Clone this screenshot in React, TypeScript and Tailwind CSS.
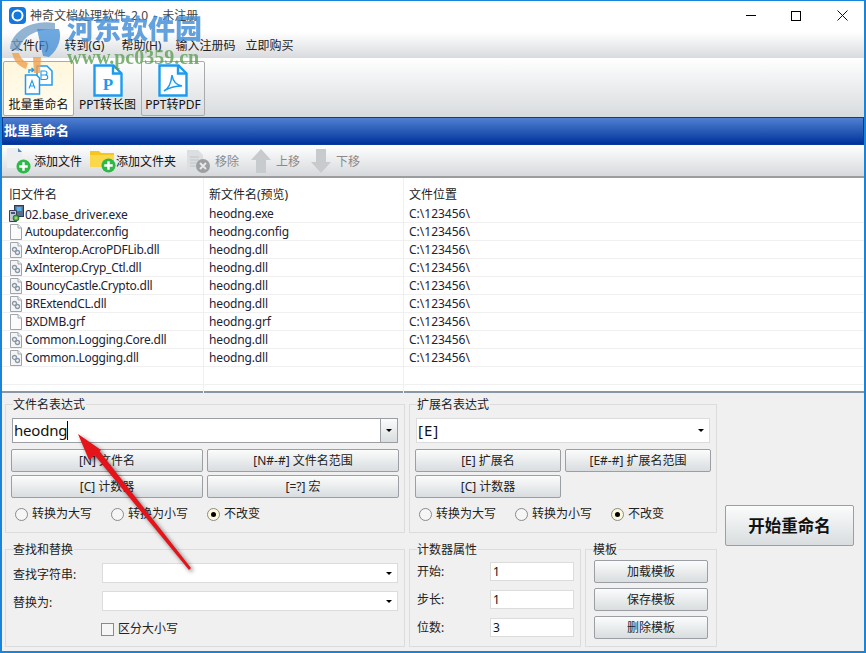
import type { ReactNode } from "react";

const FONT = "font-['Noto_Sans','Noto_Sans_CJK_SC',sans-serif]";

const rows = [
  ["02.base_driver.exe", "heodng.exe", "exe"],
  ["Autoupdater.config", "heodng.config", "blank"],
  ["AxInterop.AcroPDFLib.dll", "heodng.dll", "dll"],
  ["AxInterop.Cryp_Ctl.dll", "heodng.dll", "dll"],
  ["BouncyCastle.Crypto.dll", "heodng.dll", "dll"],
  ["BRExtendCL.dll", "heodng.dll", "dll"],
  ["BXDMB.grf", "heodng.grf", "blank"],
  ["Common.Logging.Core.dll", "heodng.dll", "dll"],
  ["Common.Logging.dll", "heodng.dll", "dll"],
];

function FileIcon({ kind }: { kind: string }) {
  if (kind === "exe") {
    return (
      <svg width="16" height="18" viewBox="0 0 16 18" className="shrink-0">
        <rect x="6.500" y="0.500" width="9" height="11" fill="#5a6f8c" stroke="#2c3a55" />
        <rect x="8.500" y="2" width="5" height="4" fill="#58b4ef" />
        <path d="M1.500 5.500h7v11h-7z" fill="#c5c9d2" stroke="#3b4257" />
        <rect x="3" y="7" width="4" height="2" fill="#40557f" />
        <circle cx="8" cy="13" r="3" fill="#3aa655" stroke="#1b5b2a" strokeWidth="0.7" />
        <path d="M6.500 13h3M8 11.500v3" stroke="#f2dd55" strokeWidth="0.9" />
      </svg>
    );
  }
  return (
    <svg width="12" height="16" viewBox="0 0 12 16" className="mx-[2px] shrink-0">
      <path d="M.5.500h7.500l3.500 3.500v11.500H.5z" fill={kind === "dll" ? "#f4f5f6" : "#fbfbfb"} stroke="#a0a5aa" />
      <path d="M8 .5v3.500h3.500" fill="#eef0f2" stroke="#a0a5aa" />
      {kind === "dll" && (
        <g fill="none" stroke="#8b97a5" strokeWidth="1.300">
          <circle cx="4.500" cy="7.500" r="2" />
          <circle cx="7.500" cy="10.500" r="2" />
        </g>
      )}
    </svg>
  );
}

function PageIcon({ children }: { children: ReactNode }) {
  return (
    <svg width="30" height="33" viewBox="0 0 30 33" className="shrink-0">
      <path d="M1.500 1.500h19l8 8v22h-27z" fill="#fff" stroke="#1c9cf0" strokeWidth="2.400" />
      <path d="M20 1.500v8h8.500" fill="none" stroke="#1c9cf0" strokeWidth="2.400" />
      {children}
    </svg>
  );
}

function RenameIcon() {
  return (
    <svg width="30" height="31" viewBox="0 0 30 31" className="shrink-0">
      <path d="M13 1h10l5 5v14H13z" fill="#fff" stroke="#1c9cf0" strokeWidth="1.500" />
      <path d="M1.500 10h11l3 3v16h-14z" fill="#fff" stroke="#1c9cf0" strokeWidth="1.500" />
      <path d="M5 20.500l3-8 3 8M6 18h4" fill="none" stroke="#1c9cf0" strokeWidth="1.100" transform="translate(0 3)" />
      <path d="M17 6h4a2 2 0 0 1 0 4h-4zm0 4h4.500a2.200 2.200 0 0 1 0 4.500H17z" fill="none" stroke="#1c9cf0" strokeWidth="1.100" />
      <path d="M5 8V5h4M7.500 3l2.500 2-2.500 2" fill="none" stroke="#1c9cf0" strokeWidth="1.400" />
    </svg>
  );
}

function PlusBadge() {
  return (
    <svg width="15" height="15" viewBox="0 0 16 16" className="absolute bottom-0 right-0">
      <circle cx="8" cy="8" r="7.500" fill="#2eb84a" />
      <path d="M8 3.500v9M3.500 8h9" stroke="#fff" strokeWidth="2.600" />
    </svg>
  );
}

function ToolButton({ label, active, icon, width }: { label: string; active?: boolean; icon: ReactNode; width: string }) {
  return (
    <div
      className={`flex h-[55px] ${width} flex-col items-center rounded-[2px] border border-[#a8aaac] pt-[2px] ${
        active ? "bg-gradient-to-b from-[#fff7dc] to-[#fffdf2]" : "bg-transparent"
      }`}
    >
      <div className="flex h-[33px] items-center">{icon}</div>
      <span className="text-[12px] leading-[16px] text-[#111]">{label}</span>
    </div>
  );
}

function ActionItem({ icon, label, muted, className }: { icon: ReactNode; label: string; muted?: boolean; className: string }) {
  return (
    <div className={`flex items-center ${className}`}>
      {icon}
      <span className={`pt-[2px] text-[12px] ${muted ? "text-[#8a8a8a]" : "text-[#111]"}`}>{label}</span>
    </div>
  );
}

function Btn({ children, className }: { children: ReactNode; className: string }) {
  return (
    <div
      className={`flex items-center justify-center rounded-[2px] border border-[#9b9fa3] bg-gradient-to-b from-[#fbfcfc] to-[#d9dddf] pt-px text-[12px] text-[#222] ${className}`}
    >
      {children}
    </div>
  );
}

function Group({ title, className, children }: { title: string; className: string; children: ReactNode }) {
  return (
    <div className={`relative border border-[#dcdcdc] ${className}`}>
      <span className="absolute left-[7px] top-[-7px] bg-[#f0f0f0] pr-px text-[12px] leading-[14px] text-[#222]">{title}</span>
      {children}
    </div>
  );
}

function Caret() {
  return <span className="h-0 w-0 border-x-[3px] border-t-[3px] border-x-transparent border-t-black" />;
}

function Combo({ children, className, boxedArrow }: { children?: ReactNode; className: string; boxedArrow?: boolean }) {
  return (
    <div className={`flex items-center bg-white ${className}`}>
      <span className="flex flex-1 items-center pl-px text-[15px] text-[#111]">{children}</span>
      <span
        className={`flex h-full w-[17px] items-center justify-center ${
          boxedArrow ? "border-l border-[#9b9fa3] bg-gradient-to-b from-[#fbfcfc] to-[#d9dddf]" : ""
        }`}
      >
        <Caret />
      </span>
    </div>
  );
}

function Radios() {
  return (
    <div className="flex text-[12px] text-[#222]">
      {["转换为大写", "转换为小写", "不改变"].map((label, i) => (
        <div key={label} className="flex w-[96px] items-center gap-[4px]">
          <span className={`flex h-[13px] w-[13px] items-center justify-center rounded-full border border-[#8a8a8a] ${i === 2 ? "bg-[#fdf7dc]" : "bg-[#f6f6f6]"}`}>
            {i === 2 && <span className="h-[5px] w-[5px] rounded-full bg-black" />}
          </span>
          {label}
        </div>
      ))}
    </div>
  );
}

function FieldRow({ label, value }: { label: string; value: string }) {
  return (
    <div className="flex h-[19px] items-center">
      <span className="w-[73px] pt-px text-[12px] text-[#222]">{label}</span>
      <span className="flex h-[19px] w-[84px] items-center border border-[#dcdcdc] bg-white pl-[2px] pt-px text-[12px] text-[#111]">{value}</span>
    </div>
  );
}

function SearchRow({ label }: { label: string }) {
  return (
    <div className="flex h-[20px] items-center">
      <span className="w-[89px] pt-[3px] text-[12px] leading-[16px] text-[#222]">{label}</span>
      <Combo className="h-[20px] w-[296px] border border-[#dcdcdc]" />
    </div>
  );
}

export default function App() {
  return (
    <div className={`${FONT} relative flex h-[653px] w-[866px] flex-col overflow-hidden border-x-2 border-b-2 border-t border-[#1a85d8] bg-[#f0f0f0]`}>
      {/* Title bar */}
      <div className="flex h-[31px] shrink-0 items-center bg-white pb-[2px] pl-[7px]">
        <svg width="17" height="17" viewBox="0 0 17 17">
          <rect width="17" height="17" rx="4" fill="#1278e0" />
          <circle cx="8.500" cy="8.500" r="5" fill="none" stroke="#fff" strokeWidth="2" />
        </svg>
        <span className="ml-[4px] text-[12px] text-[#444] [word-spacing:2px]">神奇文档处理软件 2.0 - 未注册</span>
        <div className="ml-auto flex items-center">
          <span className="mr-[35px] h-[1px] w-[10px] bg-black" />
          <span className="mr-[36px] h-[10px] w-[10px] border border-black" />
          <svg width="11" height="11" viewBox="0 0 11 11" className="mr-[16px]">
            <path d="M.5.500l10 10M10.500.500l-10 10" stroke="#111" />
          </svg>
        </div>
      </div>

      {/* Menu */}
      <div className="flex h-[26px] shrink-0 items-center bg-gradient-to-b from-white to-[#d8dbde] pl-[9px] pt-[2px] text-[12px] text-[#222]">
        <span className="mr-[16px]">文件(F)</span>
        <span className="mr-[17px]">转到(G)</span>
        <span className="mr-[14px]">帮助(H)</span>
        <span className="mr-[10px]">输入注册码</span>
        <span>立即购买</span>
      </div>

      {/* Big tool buttons */}
      <div className="flex h-[59px] shrink-0 items-center gap-[3px] bg-gradient-to-b from-white to-[#d8dbde] pl-[1px] pt-[1px]">
        <ToolButton label="批量重命名" active width="w-[71px]" icon={<RenameIcon />} />
        <ToolButton
          label="PPT转长图"
          width="w-[61px] border-transparent"
          icon={
            <PageIcon>
              <text x="15" y="26" textAnchor="middle" fontSize="17" fontWeight="700" fill="#1c9cf0" fontFamily="'Liberation Serif',serif">P</text>
            </PageIcon>
          }
        />
        <ToolButton
          label="PPT转PDF"
          width="w-[64px]"
          icon={
            <PageIcon>
              <path d="M6 27c4-2 7-7 8-16 1 7 4 10 10 11-6 0-12 1-18 5z" fill="none" stroke="#1c9cf0" strokeWidth="1.500" />
            </PageIcon>
          }
        />
      </div>

      {/* Section header */}
      <div className="flex h-[28px] shrink-0 items-center border border-[#0a3a9e] bg-gradient-to-b from-[#4f80d2] to-[#00329a] pl-[1px] text-[13px] font-bold text-white">
        批里重命名
      </div>

      {/* Actions */}
      <div className="flex h-[33px] shrink-0 items-center border-b-2 border-[#9a9c9e] bg-gradient-to-b from-white to-[#d6d9dc] pl-[5px]">
        <ActionItem
          label="添加文件"
          className="mr-[7px] w-[76px] gap-[3px]"
          icon={
            <span className="relative block h-[26px] w-[24px]">
              <svg width="15" height="20" viewBox="0 0 15 20" className="absolute left-0 top-0">
                <path d="M0 0h11l4 4v16H0z" fill="#eceef0" />
                <path d="M11 0l4 4h-4z" fill="#4d8cc4" />
              </svg>
              <PlusBadge />
            </span>
          }
        />
        <ActionItem
          label="添加文件夹"
          className="w-[97px]"
          icon={
            <span className="relative block h-[24px] w-[26px]">
              <svg width="24" height="18" viewBox="0 0 24 18" className="absolute left-0 top-0">
                <path d="M0 2h9l2 2h13v14H0z" fill="#f6c51f" />
                <path d="M0 6h24v12H0z" fill="#fbd84a" />
              </svg>
              <PlusBadge />
            </span>
          }
        />
        <ActionItem
          label="移除"
          muted
          className="mr-[12px] gap-[4px]"
          icon={
            <svg width="24" height="24" viewBox="0 0 24 24">
              <path d="M0 1h11l5 5v16H0z" fill="#dcdfe1" />
              <g stroke="#c2c5c8" strokeWidth="1.200">
                <path d="M3 8h9M3 11h9M3 14h7M3 17h6" />
              </g>
              <circle cx="16" cy="17" r="7" fill="#9d9fa1" />
              <path d="M13 14l6 6M19 14l-6 6" stroke="#e6e7e8" strokeWidth="2" />
            </svg>
          }
        />
        <ActionItem
          label="上移"
          muted
          className="mr-[11px] gap-[5px]"
          icon={
            <svg width="20" height="24" viewBox="0 0 20 24">
              <path d="M10 0l10 11h-5v13H5V11H0z" fill="#c8cbcd" />
            </svg>
          }
        />
        <ActionItem
          label="下移"
          muted
          className="gap-[5px]"
          icon={
            <svg width="20" height="24" viewBox="0 0 20 24">
              <path d="M10 24L0 13h5V0h10v13h5z" fill="#c8cbcd" />
            </svg>
          }
        />
      </div>

      {/* File list */}
      <div className="h-[215px] shrink-0 border-b-2 border-[#8a98a6] bg-white">
        <div className="grid h-[27px] grid-cols-[201px_200px_1fr] text-[12px] leading-[33px] text-[#222]">
          <span className="pl-[7px]">旧文件名</span>
          <span className="border-l border-[#f0f0f0] pl-[5px]">新文件名(预览)</span>
          <span className="border-l border-[#f0f0f0] pl-[5px]">文件位置</span>
        </div>
        {rows.map(([name, next, kind]) => (
          <div key={name} className="grid h-[18px] grid-cols-[201px_200px_1fr] items-center border-b border-[#f0f0f0] text-[12px] leading-[17px] text-[#1c2333]">
            <div className="flex items-center gap-[1px] pl-[6px]">
              <FileIcon kind={kind} />
              <span className={kind === "exe" ? "" : "tracking-[-0.25px]"}>{name}</span>
            </div>
            <span className="h-full border-l border-[#f0f0f0] pl-[5px] tracking-[-0.15px]">{next}</span>
            <span className="h-full border-l border-[#f0f0f0] pl-[5px]">C:\123456\</span>
          </div>
        ))}
        {[0, 1].map((i) => (
          <div key={i} className="grid h-[18px] grid-cols-[201px_200px_1fr] border-b border-[#f0f0f0]">
            <span />
            <span className="border-l border-[#f0f0f0]" />
            <span className="border-l border-[#f0f0f0]" />
          </div>
        ))}
      </div>

      {/* Options */}
      <div className="flex flex-1 gap-[8px] pl-[3px] pt-[11px]">
        <div className="flex w-[712px] flex-col gap-[16px]">
          <div className="flex gap-[4px]">
            <Group title="文件名表达式" className="h-[129px] w-[400px] pl-[5px] pt-[13px]">
              <Combo boxedArrow className="ml-[1px] h-[25px] w-[386px] border border-[#9b9fa3]">
                <span className="tracking-[-0.2px]">heodng</span>
                <span className="h-[19px] w-px bg-black" />
              </Combo>
              <div className="mt-[6px] grid w-[388px] grid-cols-[192px_192px] gap-x-[4px] gap-y-[3px]">
                <Btn className="h-[23px]">[N] 文件名</Btn>
                <Btn className="h-[23px]">[N#-#] 文件名范围</Btn>
                <Btn className="h-[23px]">[C] 计数器</Btn>
                <Btn className="h-[23px]">[=?] 宏</Btn>
              </div>
              <div className="mt-[7px] pl-[4px]">
                <Radios />
              </div>
            </Group>
            <Group title="扩展名表达式" className="h-[129px] w-[308px] pl-[5px] pt-[13px]">
              <Combo className="ml-[1px] h-[25px] w-[294px] border border-[#dcdcdc]">
                <span className="tracking-[1px]">[E]</span>
              </Combo>
              <div className="mt-[6px] grid w-[296px] grid-cols-[146px_146px] gap-x-[4px] gap-y-[3px]">
                <Btn className="h-[23px]">[E] 扩展名</Btn>
                <Btn className="h-[23px]">[E#-#] 扩展名范围</Btn>
                <Btn className="h-[23px]">[C] 计数器</Btn>
              </div>
              <div className="mt-[7px] pl-[4px]">
                <Radios />
              </div>
            </Group>
          </div>
          <div className="flex gap-[4px]">
            <Group title="查找和替换" className="h-[98px] w-[400px] pl-[7px] pt-[13px]">
              <div className="flex flex-col gap-[8px]">
                <SearchRow label="查找字符串:" />
                <SearchRow label="替换为:" />
              </div>
              <div className="mt-[9px] flex items-center gap-[4px] pl-[88px] text-[12px] text-[#222]">
                <span className="h-[13px] w-[13px] border border-[#8a8a8a] bg-[#f6f6f6]" />
                区分大小写
              </div>
            </Group>
            <Group title="计数器属性" className="h-[98px] w-[172px] pl-[7px] pt-[12px]">
              <div className="flex flex-col gap-[9px]">
                <FieldRow label="开始:" value="1" />
                <FieldRow label="步长:" value="1" />
                <FieldRow label="位数:" value="3" />
              </div>
            </Group>
            <Group title="模板" className="h-[98px] w-[132px] pl-[8px] pt-[10px]">
              <div className="flex flex-col gap-[5px]">
                <Btn className="h-[23px] w-[114px]">加载模板</Btn>
                <Btn className="h-[23px] w-[114px]">保存模板</Btn>
                <Btn className="h-[23px] w-[114px]">删除模板</Btn>
              </div>
            </Group>
          </div>
        </div>
        <div className="pt-[101px]">
          <Btn className="h-[41px] w-[129px] !text-[16.5px] font-bold !text-[#111]">开始重命名</Btn>
        </div>
      </div>

      {/* Site watermark over the window */}
      <div className="pointer-events-none absolute left-[5px] top-[12px] h-[62px] w-[210px]">
        <svg width="58" height="54" viewBox="0 0 58 54" className="absolute left-0 top-[8px]">
          <path d="M48 2C25-2 4 10 3 28l9 2C14 16 28 8 48 8z" fill="#6f9cc4" fillOpacity="0.75" />
          <path d="M30 8h22c3 8 0 20-10 28l-6-1z" fill="#3d8bd6" fillOpacity="0.75" />
          <path d="M5 32c2 8 6 13 14 16l2-6c-5-2-8-6-9-10z" fill="#f0a050" fillOpacity="0.8" />
          <path d="M26 36h8l-1 16h-6z" fill="#f0a050" fillOpacity="0.8" />
        </svg>
        <span className="absolute left-[60px] top-[-2px] whitespace-nowrap font-['Noto_Sans_CJK_SC',sans-serif] text-[27px] font-black leading-[34px] text-[#3d8bd6] opacity-80">
          河东软件园
        </span>
        <span className="absolute left-[60px] top-[33px] whitespace-nowrap font-['Liberation_Serif',serif] text-[20px] font-bold leading-[22px] text-[#5f9f55] opacity-80">
          www.pc0359.cn
        </span>
      </div>

      {/* Red arrow annotation */}
      <svg width="150" height="160" viewBox="0 0 150 160" className="pointer-events-none absolute left-[60px] top-[420px] drop-shadow-[2px_2px_2px_rgba(0,0,0,0.55)]">
        <path d="M16 13L39 29 27 39zM30 31L35 27 129 147 127 149z" fill="#e4141a" />
      </svg>
    </div>
  );
}
